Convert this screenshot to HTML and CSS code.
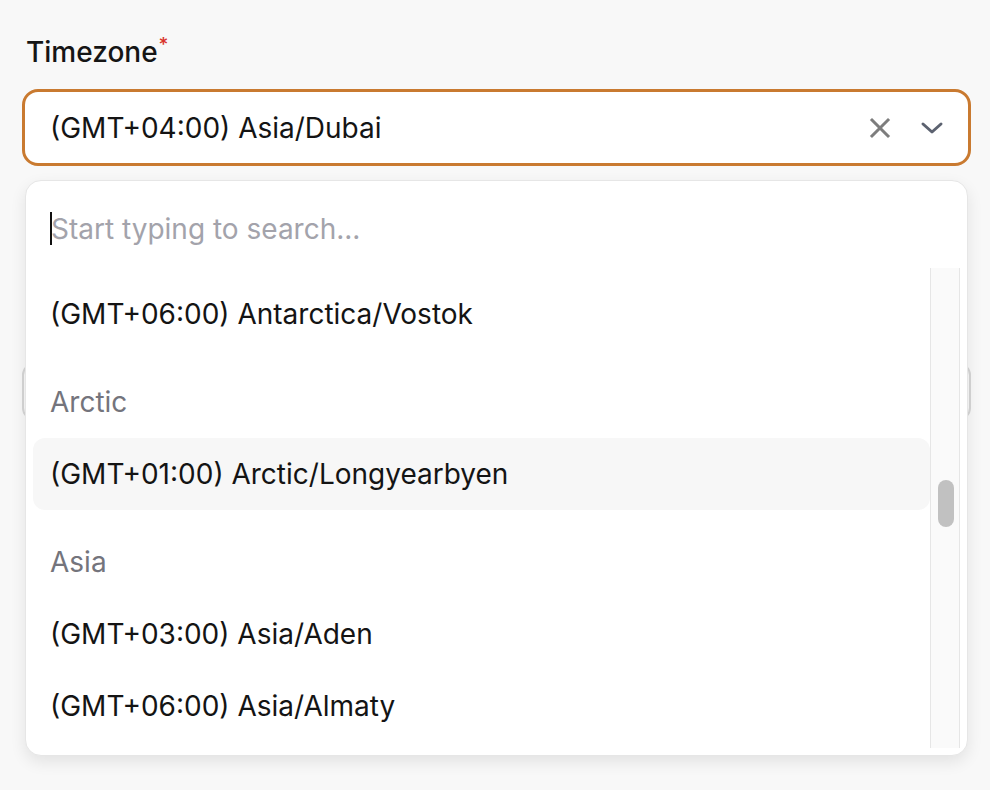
FILE: index.html
```html
<!DOCTYPE html>
<html>
<head>
<meta charset="utf-8">
<link rel="stylesheet" href="styles.css">
</head>
<body>
<div class="form">
  <div class="field">
    <label class="label">Timezone<span class="req">*</span></label>
    <div class="select-wrap">
      <div class="select">
        <span class="value">(GMT+04:00) Asia/Dubai</span>
        <span class="icons">
          <svg class="ic-x" width="22" height="22" viewBox="0 0 22 22"><path d="M3 3L19 19M19 3L3 19" stroke="#7d7d7d" stroke-width="3" stroke-linecap="square" fill="none"/></svg>
          <svg class="ic-chev" width="24" height="14" viewBox="0 0 24 14"><path d="M3 3L12 11L21 3" stroke="#5c6270" stroke-width="3" stroke-linecap="round" stroke-linejoin="round" fill="none"/></svg>
        </span>
      </div>
      <div class="menu">
        <div class="search"><span class="caret"></span><span class="placeholder">Start typing to search...</span></div>
        <div class="body">
          <div class="list">
            <div class="item">(GMT+06:00) Antarctica/Vostok</div>
            <div class="group">Arctic</div>
            <div class="item active">(GMT+01:00) Arctic/Longyearbyen</div>
            <div class="group">Asia</div>
            <div class="item">(GMT+03:00) Asia/Aden</div>
            <div class="item">(GMT+06:00) Asia/Almaty</div>
          </div>
          <div class="track"><div class="thumb"></div></div>
        </div>
      </div>
    </div>
  </div>
  <div class="next-field"></div>
</div>
</body>
</html>
```
FILE: styles.css
```css
* { box-sizing: border-box; }
html, body { margin: 0; padding: 0; }
body {
  background: #f8f8f8;
  font-family: Inter, "Noto Sans", sans-serif;
  color: #111;
  width: 990px;
  height: 790px;
  overflow: hidden;
}
.form {
  padding: 34px 19px 0 22px;
  display: flex;
  flex-direction: column;
}
.label {
  display: block;
  font-size: 28px;
  font-weight: 500;
  line-height: 36px;
  padding-left: 4px;
  color: #151515;
}
.req {
  color: #d9342b;
  font-size: 19px;
  vertical-align: top;
  position: relative;
  top: -7px;
  margin-left: 1px;
}
.select-wrap { position: relative; margin-top: 19px; }
.select {
  height: 77px;
  border: 3px solid #c97a30;
  border-radius: 16px;
  background: #fff;
  display: flex;
  align-items: center;
  padding: 0 24px 0 25px;
}
.value { flex: 1; font-size: 28px; color: #141414; }
.icons { display: flex; align-items: center; gap: 29px; }
.ic-x { margin-top: 1px; }
.ic-chev { margin-top: 1px; }
.menu {
  position: absolute;
  left: 3px;
  right: 3px;
  top: 91px;
  height: 576px;
  background: #fff;
  border: 1px solid #e6e6e6;
  border-radius: 16px;
  box-shadow: 0 6px 16px rgba(0,0,0,0.09);
  display: flex;
  flex-direction: column;
  padding: 0 7px 7px 7px;
  z-index: 2;
}
.search {
  height: 87px;
  display: flex;
  align-items: center;
  padding-left: 17px;
  padding-top: 6px;
  flex-shrink: 0;
}
.caret { width: 2px; height: 33px; background: #111; margin-right: -1px; margin-top: 2px; }
.placeholder { font-size: 28px; color: #a3a3ab; margin-top: 2px; }
.body { flex: 1; display: flex; min-height: 0; }
.list {
  flex: 1;
  padding-top: 10px;
  overflow: hidden;
}
.item {
  height: 72px;
  display: flex;
  align-items: center;
  padding-left: 17px;
  font-size: 28px;
  color: #141414;
  border-radius: 12px;
}
.item.active { background: #f7f7f7; }
.group {
  height: 88px;
  padding-top: 16px;
  display: flex;
  align-items: center;
  padding-left: 17px;
  font-size: 28px;
  color: #74747c;
}
.track {
  width: 30px;
  background: #fafafa;
  border-left: 1px solid #e6e6e6;
  border-right: 1px solid #e6e6e6;
  padding-top: 212px;
  display: flex;
  justify-content: center;
}
.thumb {
  width: 16px;
  height: 47px;
  border-radius: 8px;
  background: #c1c1c1;
  margin-left: 1px;
}
.next-field {
  margin-top: 197px;
  height: 57px;
  border: 2px solid #d6d6d6;
  border-radius: 12px;
  background: #f9f9f9;
}
```
